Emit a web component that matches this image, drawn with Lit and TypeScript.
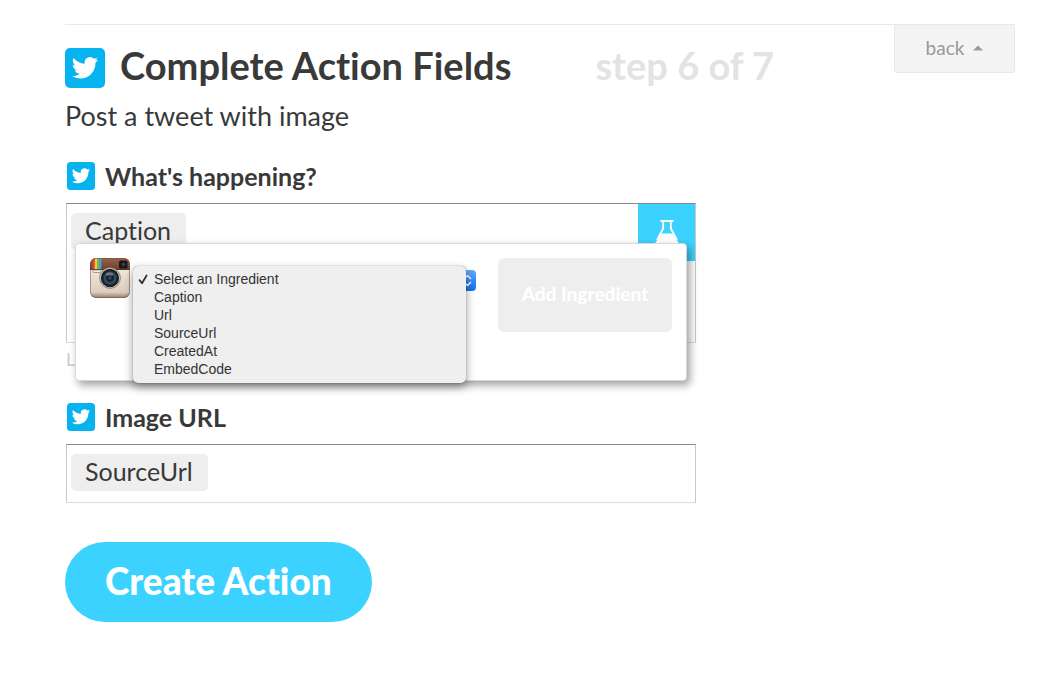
import { LitElement, html, css, svg } from "lit";
import { customElement, property, state } from "lit/decorators.js";

@customElement("twitter-badge")
export class TwitterBadge extends LitElement {
  static styles = css`
    :host { display: block; flex: none; width: 28px; height: 28px; }
    :host([large]) { width: 40px; height: 40px; }
    svg { display: block; width: 100%; height: 100%; }
  `;
  render() {
    return html`<svg viewBox="0 0 40 40" aria-hidden="true">
      <rect width="40" height="40" rx="5" fill="#05b3ef" />
      <path
        transform="translate(6.8 6.6) scale(1.1)"
        fill="#fff"
        d="M23.953 4.57a10 10 0 01-2.825.775 4.958 4.958 0 002.163-2.723c-.951.555-2.005.959-3.127 1.184a4.92 4.92 0 00-8.384 4.482C7.69 8.095 4.067 6.13 1.64 3.162a4.822 4.822 0 00-.666 2.475c0 1.71.87 3.213 2.188 4.096a4.904 4.904 0 01-2.228-.616v.06a4.923 4.923 0 003.946 4.827 4.996 4.996 0 01-2.212.085 4.936 4.936 0 004.604 3.417 9.867 9.867 0 01-6.102 2.105c-.39 0-.779-.023-1.17-.067a13.995 13.995 0 007.557 2.209c9.053 0 13.998-7.496 13.998-13.985 0-.21 0-.42-.015-.63A9.935 9.935 0 0024 4.59z"
      />
    </svg>`;
  }
}

@customElement("instagram-badge")
export class InstagramBadge extends LitElement {
  static styles = css`
    :host { display: block; flex: none; width: 40px; height: 40px; }
    svg { display: block; width: 100%; height: 100%; }
  `;
  render() {
    const stripes = ["#e8433f", "#f6c83c", "#6cc04a", "#3fa3e0"];
    return html`<svg viewBox="0 0 40 40" aria-hidden="true">
      <defs>
        <linearGradient id="body" x1="0" y1="0" x2="0" y2="1">
          <stop offset="0.3" stop-color="#efe6da" />
          <stop offset="0.85" stop-color="#dccfc0" />
          <stop offset="1" stop-color="#98796a" />
        </linearGradient>
        <linearGradient id="leather" x1="0" y1="0" x2="0" y2="1">
          <stop offset="0" stop-color="#9a6448" />
          <stop offset="1" stop-color="#6d3f2a" />
        </linearGradient>
        <radialGradient id="glass">
          <stop offset="0" stop-color="#55536a" />
          <stop offset="0.35" stop-color="#15161f" />
          <stop offset="0.7" stop-color="#35566a" />
          <stop offset="1" stop-color="#10151b" />
        </radialGradient>
        <clipPath id="shape"><rect width="40" height="40" rx="6" /></clipPath>
      </defs>
      <g clip-path="url(#shape)">
        <rect width="40" height="40" fill="url(#body)" />
        <rect width="40" height="11.5" fill="url(#leather)" />
        ${stripes.map((c, i) => svg`<rect x=${2.6 + i * 2.2} y="0" width="2.2" height="11.5" fill=${c} />`)}
        <rect y="11" width="40" height="1" fill="#5b3523" />
        <rect x="3" y="12" width="8" height="2.5" rx="1" fill="#f5efe6" stroke="#8d7a68" stroke-width="0.7" />
        <rect x="29" y="2.5" width="8.5" height="8" rx="1.5" fill="#16161c" />
        <circle cx="33.5" cy="6.5" r="2" fill="#34384a" />
        <rect x="0.4" y="0.4" width="39.2" height="39.2" rx="6" fill="none" stroke="#6b4a38" stroke-opacity="0.6" stroke-width="0.9" />
      </g>
      <circle cx="20" cy="20" r="10.4" fill="#e4dbd0" stroke="#6c5a4e" stroke-width="0.7" />
      <circle cx="20" cy="20" r="9.2" fill="#20222a" />
      <circle cx="20" cy="20" r="7.6" fill="url(#glass)" />
      <ellipse cx="19.5" cy="16.2" rx="3.6" ry="1.6" fill="#b5c3d0" opacity="0.45" />
    </svg>`;
  }
}

@customElement("token-field")
export class TokenField extends LitElement {
  @property() label = "";
  @property() token = "";
  @property({ type: Boolean, reflect: true }) multiline = false;

  static styles = css`
    :host { display: block; position: relative; }
    .label { display: flex; align-items: center; gap: 10px; padding-left: 2px; color: #393939; font-size: 25px; line-height: 28px; font-weight: 700; }
    .field {
      display: flex;
      align-items: flex-start;
      box-sizing: border-box;
      min-height: 59px;
      margin: 13px 0 0 1px;
      border: 1px solid #c8c8c8;
      border-top-color: #8a8a8a;
      border-bottom-color: #dcdcdc;
      background: #fff;
    }
    :host([multiline]) .field { min-height: 140px; }
    .token { margin: 9px 0 0 4px; padding: 0 15px 3px 14px; border-radius: 5px; background: #eee; color: #393939; font-size: 25px; line-height: 34px; }
    .entry { flex: 1; min-width: 0; height: 56px; padding: 0 8px; border: 0; outline: 0; resize: none; background: none; color: #393939; font: inherit; font-size: 25px; }
    textarea.entry { height: 136px; }
  `;

  render() {
    return html`
      <label class="label" for="entry"><twitter-badge></twitter-badge>${this.label}</label>
      <div class="field">
        <span class="token">${this.token}</span>
        ${this.multiline
          ? html`<textarea class="entry" id="entry"></textarea>`
          : html`<input class="entry" id="entry" type="text" />`}
        <slot name="tool"></slot>
      </div>
      <slot></slot>
    `;
  }
}

@customElement("ingredient-picker")
export class IngredientPicker extends LitElement {
  @state() private selected = "Select an Ingredient";
  private options = ["Select an Ingredient", "Caption", "Url", "SourceUrl", "CreatedAt", "EmbedCode"];

  static styles = css`
    :host {
      display: flex;
      align-items: flex-start;
      box-sizing: border-box;
      min-height: 138px;
      padding: 14px;
      border: 1px solid #d9d9d9;
      border-radius: 4px;
      background: #fff;
      box-shadow: 3px 4px 8px rgba(0, 0, 0, 0.38);
    }
    .chooser { position: relative; flex: 1; margin: 12px 22px 0 3px; }
    .select { appearance: none; display: block; width: 100%; height: 21px; padding: 0 24px 0 20px; border: 0; border-radius: 4px; background: #fff; color: #333; font: 14px "Liberation Sans", Arial, sans-serif; }
    .stepper { position: absolute; top: 0; right: 0; width: 17px; height: 21px; border-radius: 0 4px 4px 0; background: linear-gradient(#62abf7, #0f71f2); pointer-events: none; }
    .stepper svg { display: block; }
    .menu {
      position: absolute;
      top: -4px;
      left: 0;
      right: 10px;
      margin: 0;
      padding: 4px 0 5px;
      border-radius: 5px;
      list-style: none;
      background: #efefef;
      box-shadow: 0 0 1px rgba(0, 0, 0, 0.6), 0 4px 10px rgba(0, 0, 0, 0.4);
      color: #333;
      font: 14px/18px "Liberation Sans", Arial, sans-serif;
    }
    .option { position: relative; padding-left: 21px; cursor: default; }
    .check { position: absolute; left: 5px; top: 4px; }
    .add { flex: none; width: 174px; height: 74px; padding: 0 0 4px; border: 0; border-radius: 6px; background: #eee; color: #fff; font: 900 19px Lato, sans-serif; }
  `;

  render() {
    return html`
      <instagram-badge></instagram-badge>
      <div class="chooser">
        <select class="select" aria-label="Ingredient">
          ${this.options.map((o) => html`<option ?selected=${o === this.selected}>${o}</option>`)}
        </select>
        <span class="stepper">
          <svg width="17" height="21" viewBox="0 0 17 21" fill="none" stroke="#fff" stroke-width="1.6" stroke-linecap="round" stroke-linejoin="round">
            <path d="M5.5 8.5 8.5 5.5 11.5 8.5M5.5 12.5 8.5 15.5 11.5 12.5" />
          </svg>
        </span>
        <ul class="menu" role="listbox" aria-label="Ingredients">
          ${this.options.map(
            (o) => html`<li class="option" role="option" aria-selected=${o === this.selected} @click=${() => (this.selected = o)}>
              ${o === this.selected
                ? html`<svg class="check" width="11" height="11" viewBox="0 0 11 11" fill="none" stroke="#333" stroke-width="1.8" stroke-linecap="round" stroke-linejoin="round"><path d="M1.5 6.2 4 9.2 8.6 1.5" /></svg>`
                : ""}${o}
            </li>`
          )}
        </ul>
      </div>
      <button class="add" type="button" disabled>Add Ingredient</button>
    `;
  }
}

@customElement("app-root")
export class AppRoot extends LitElement {
  static styles = css`
    :host { display: block; min-height: 100vh; background: #fff; color: #393939; font-family: Lato, sans-serif; font-variant-ligatures: none; }
    .page { padding: 24px 44px 40px 65px; }
    .top { display: flex; align-items: flex-start; justify-content: space-between; border-top: 1px solid #e8e8e8; }
    .heading { display: flex; align-items: flex-start; margin-top: 23px; }
    .title { margin: 0 84px 0 15px; font-size: 38px; line-height: 34px; font-weight: 700; white-space: nowrap; }
    .step { color: #e3e3e3; font-size: 38px; line-height: 34px; font-weight: 700; white-space: nowrap; }
    .back { display: flex; align-items: center; justify-content: center; gap: 9px; box-sizing: border-box; width: 121px; height: 49px; margin-top: -1px; padding: 0 0 2px; border: 1px solid #e8e8e8; border-radius: 3px; background: #f4f4f4; color: #999; font: 400 19px Lato, sans-serif; }
    .subtitle { margin: 0; font-size: 27px; line-height: 36px; font-weight: 400; }
    .form { display: flex; flex-direction: column; align-items: flex-start; max-width: 631px; }
    .intro { padding: 10px 0 28px; }
    .row { width: 100%; }
    .flask { display: flex; justify-content: center; flex: none; width: 57px; height: 57px; padding: 16px 0 0; border: 0; background: #3cd2ff; }
    .hint { margin: 5px 0 0 1px; color: #ccc; font-size: 18px; line-height: 22px; }
    .picker { position: absolute; top: 81px; left: 10px; right: 9px; z-index: 1; }
    .image { margin-top: 33px; }
    .submit { height: 80px; margin-top: 39px; padding: 0 40px 4px; border: 0; border-radius: 40px; background: #3cd2ff; color: #fff; font: 900 37px Lato, sans-serif; font-variant-ligatures: none; }
  `;

  render() {
    return html`
      <main class="page">
        <header class="top">
          <div class="heading">
            <twitter-badge large></twitter-badge>
            <h1 class="title">Complete Action Fields</h1>
            <span class="step">step 6 of 7</span>
          </div>
          <button class="back" type="button">
            back
            <svg width="10" height="6" viewBox="0 0 10 6" fill="#999" aria-hidden="true"><path d="M0 5.5 5 0.5 10 5.5z" /></svg>
          </button>
        </header>
        <form class="form" @submit=${(e: Event) => e.preventDefault()}>
          <div class="intro"><p class="subtitle">Post a tweet with image</p></div>
          <token-field class="row" label="What's happening?" token="Caption" multiline>
            <button class="flask" slot="tool" type="button" aria-label="Ingredients">
              <svg width="26" height="28" viewBox="0 0 26 28" aria-hidden="true">
                <path d="M6.5 1H19.5M9.2 1.5V8.5L3 20M16.8 1.5V8.5L23 20" fill="none" stroke="#fff" stroke-width="1.8" />
                <path d="M8 13.5H18L24.5 22.5Q26 27 22 27H4Q0 27 1.5 22.5z" fill="#fff" />
              </svg>
            </button>
            <p class="hint">L</p>
            <ingredient-picker class="picker"></ingredient-picker>
          </token-field>
          <token-field class="row image" label="Image URL" token="SourceUrl"></token-field>
          <button class="submit" type="submit">Create Action</button>
        </form>
      </main>
    `;
  }
}
